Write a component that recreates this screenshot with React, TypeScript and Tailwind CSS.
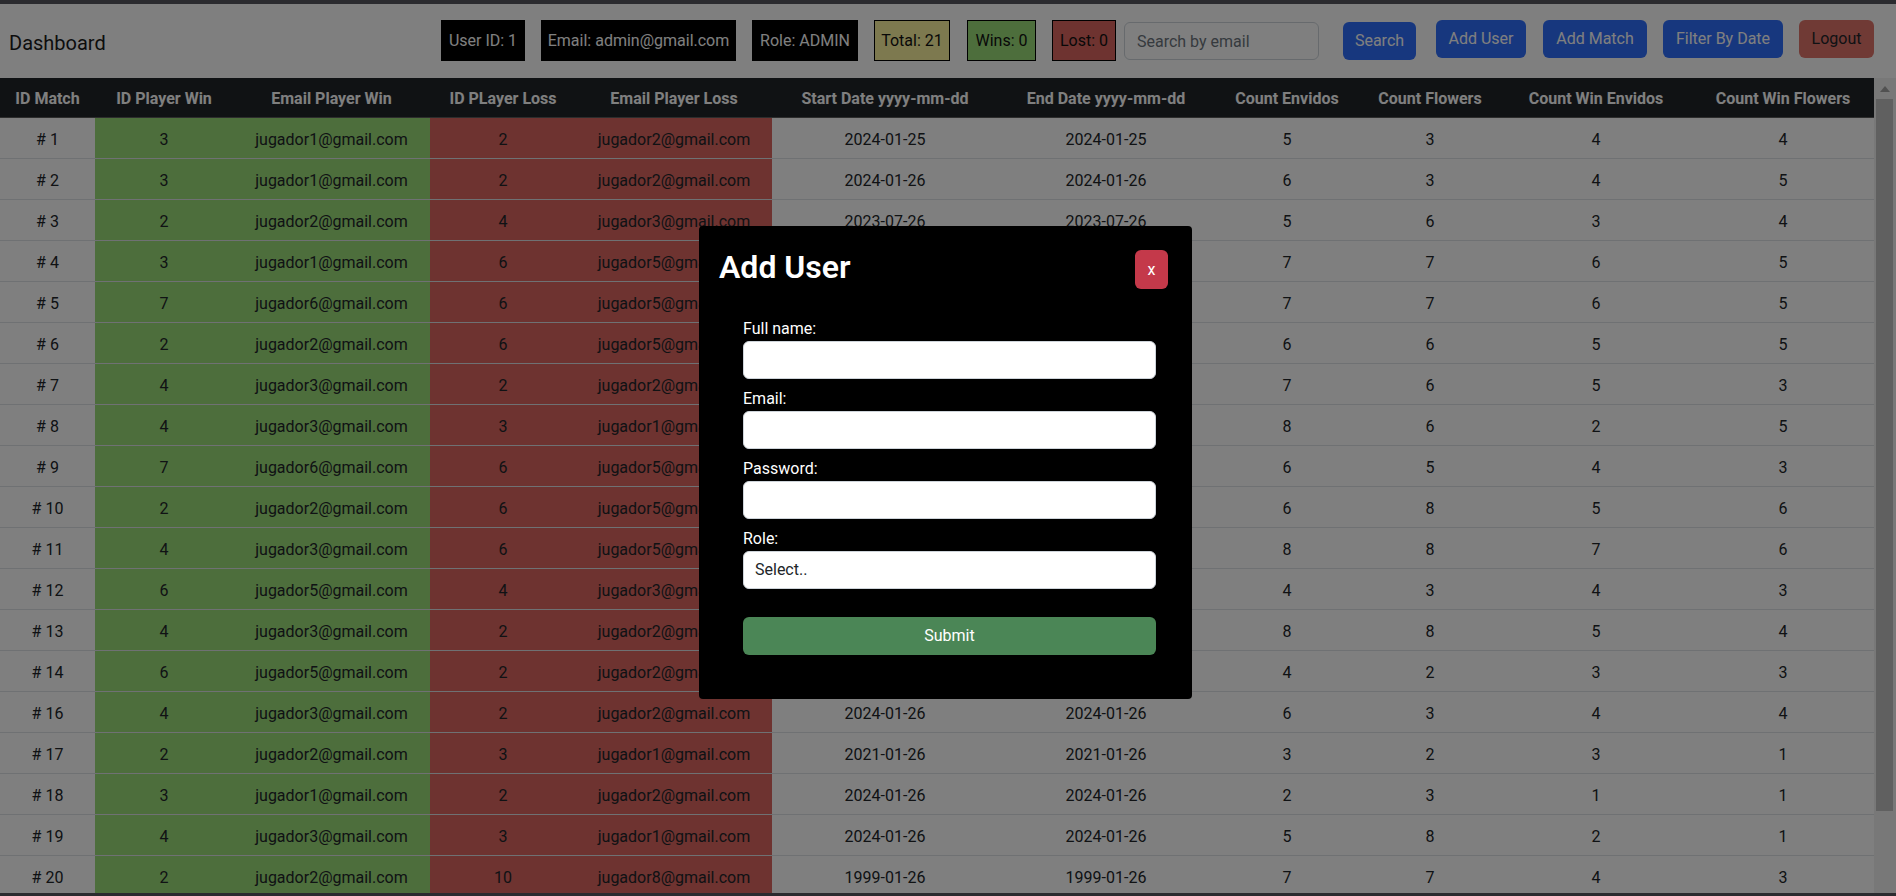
import React from "react";

type Row = {
  id: number;
  w: number;
  we: string;
  l: number;
  le: string;
  s: string;
  e: string;
  ce: number;
  cf: number;
  cwe: number;
  cwf: number;
};

const j = (n: number) => `jugador${n}@gmail.com`;

const rows: Row[] = [
  { id: 1, w: 3, we: j(1), l: 2, le: j(2), s: "2024-01-25", e: "2024-01-25", ce: 5, cf: 3, cwe: 4, cwf: 4 },
  { id: 2, w: 3, we: j(1), l: 2, le: j(2), s: "2024-01-26", e: "2024-01-26", ce: 6, cf: 3, cwe: 4, cwf: 5 },
  { id: 3, w: 2, we: j(2), l: 4, le: j(3), s: "2023-07-26", e: "2023-07-26", ce: 5, cf: 6, cwe: 3, cwf: 4 },
  { id: 4, w: 3, we: j(1), l: 6, le: j(5), s: "2024-01-26", e: "2024-01-26", ce: 7, cf: 7, cwe: 6, cwf: 5 },
  { id: 5, w: 7, we: j(6), l: 6, le: j(5), s: "2024-01-26", e: "2024-01-26", ce: 7, cf: 7, cwe: 6, cwf: 5 },
  { id: 6, w: 2, we: j(2), l: 6, le: j(5), s: "2024-01-26", e: "2024-01-26", ce: 6, cf: 6, cwe: 5, cwf: 5 },
  { id: 7, w: 4, we: j(3), l: 2, le: j(2), s: "2024-01-26", e: "2024-01-26", ce: 7, cf: 6, cwe: 5, cwf: 3 },
  { id: 8, w: 4, we: j(3), l: 3, le: j(1), s: "2024-01-26", e: "2024-01-26", ce: 8, cf: 6, cwe: 2, cwf: 5 },
  { id: 9, w: 7, we: j(6), l: 6, le: j(5), s: "2024-01-26", e: "2024-01-26", ce: 6, cf: 5, cwe: 4, cwf: 3 },
  { id: 10, w: 2, we: j(2), l: 6, le: j(5), s: "2024-01-26", e: "2024-01-26", ce: 6, cf: 8, cwe: 5, cwf: 6 },
  { id: 11, w: 4, we: j(3), l: 6, le: j(5), s: "2024-01-26", e: "2024-01-26", ce: 8, cf: 8, cwe: 7, cwf: 6 },
  { id: 12, w: 6, we: j(5), l: 4, le: j(3), s: "2024-01-26", e: "2024-01-26", ce: 4, cf: 3, cwe: 4, cwf: 3 },
  { id: 13, w: 4, we: j(3), l: 2, le: j(2), s: "2024-01-26", e: "2024-01-26", ce: 8, cf: 8, cwe: 5, cwf: 4 },
  { id: 14, w: 6, we: j(5), l: 2, le: j(2), s: "2024-01-26", e: "2024-01-26", ce: 4, cf: 2, cwe: 3, cwf: 3 },
  { id: 16, w: 4, we: j(3), l: 2, le: j(2), s: "2024-01-26", e: "2024-01-26", ce: 6, cf: 3, cwe: 4, cwf: 4 },
  { id: 17, w: 2, we: j(2), l: 3, le: j(1), s: "2021-01-26", e: "2021-01-26", ce: 3, cf: 2, cwe: 3, cwf: 1 },
  { id: 18, w: 3, we: j(1), l: 2, le: j(2), s: "2024-01-26", e: "2024-01-26", ce: 2, cf: 3, cwe: 1, cwf: 1 },
  { id: 19, w: 4, we: j(3), l: 3, le: j(1), s: "2024-01-26", e: "2024-01-26", ce: 5, cf: 8, cwe: 2, cwf: 1 },
  { id: 20, w: 2, we: j(2), l: 10, le: j(8), s: "1999-01-26", e: "1999-01-26", ce: 7, cf: 7, cwe: 4, cwf: 3 },
];

const headers = [
  "ID Match",
  "ID Player Win",
  "Email Player Win",
  "ID PLayer Loss",
  "Email Player Loss",
  "Start Date yyyy-mm-dd",
  "End Date yyyy-mm-dd",
  "Count Envidos",
  "Count Flowers",
  "Count Win Envidos",
  "Count Win Flowers",
];

const td = "h-[41px] p-0 pt-[3px] text-center align-middle border-b border-[#dee2e6]";
const green = "bg-[#9adc78]";
const red = "bg-[#dc6660]";

function Field({ label, children }: { label: string; children: React.ReactNode }) {
  return (
    <div className="mb-[8px]">
      <label className="block text-[16px] leading-[24px] text-white">{label}</label>
      {children}
    </div>
  );
}

export default function App() {
  return (
    <div className="relative w-[1896px] h-[896px] overflow-hidden bg-white text-[#212529] font-['Segoe_UI',Roboto,'Noto_Sans',sans-serif] flex flex-col">
      <div className="h-[4px] shrink-0 bg-[#56565f]" />

      {/* Header */}
      <div className="h-[74px] shrink-0 flex items-start pt-[16px] pl-[9px] pr-[22px]">
        <div className="h-[45px] flex items-center text-[20px] text-[#1a1a1a]">Dashboard</div>
        <div className="ml-auto flex items-start text-[16px]">
          <div className="h-[41px] w-[84px] flex items-center justify-center bg-black text-white">User ID: 1</div>
          <div className="ml-[16px] h-[41px] w-[195px] flex items-center justify-center bg-black text-white">Email: admin@gmail.com</div>
          <div className="ml-[16px] h-[41px] w-[106px] flex items-center justify-center bg-black text-white">Role: ADMIN</div>
          <div className="ml-[16px] h-[41px] w-[76px] flex items-center justify-center bg-[#fbf39e] border border-black text-[#111]">Total: 21</div>
          <div className="ml-[17px] h-[41px] w-[69px] flex items-center justify-center bg-[#9adc78] border border-black text-[#111]">Wins: 0</div>
          <div className="ml-[16px] h-[41px] w-[64px] flex items-center justify-center bg-[#dc6660] border border-black text-[#111]">Lost: 0</div>
          <input
            className="ml-[8px] mt-[2px] h-[38px] w-[195px] rounded-[6px] border border-[#ced4da] bg-white px-[12px] text-[16px] placeholder:text-[#6c757d] outline-none"
            placeholder="Search by email"
          />
          <button className="ml-[24px] mt-[2px] h-[38px] w-[73px] rounded-[6px] bg-[#2f6ffd] text-white">Search</button>
          <button className="ml-[20px] h-[38px] w-[90px] rounded-[6px] bg-[#2f6ffd] text-white">Add User</button>
          <button className="ml-[17px] h-[38px] w-[104px] rounded-[6px] bg-[#2f6ffd] text-white">Add Match</button>
          <button className="ml-[16px] h-[38px] w-[120px] rounded-[6px] bg-[#2f6ffd] text-white">Filter By Date</button>
          <button className="ml-[16px] h-[38px] w-[75px] rounded-[6px] bg-[#e0746b] text-[#212529]">Logout</button>
        </div>
      </div>

      {/* Table area */}
      <div className="flex-1 min-h-0 flex overflow-hidden">
        <div className="w-[1874px] overflow-hidden">
          <table className="w-[1874px] table-fixed border-separate border-spacing-0 text-[16px]">
            <colgroup>
              <col className="w-[95px]" />
              <col className="w-[138px]" />
              <col className="w-[197px]" />
              <col className="w-[146px]" />
              <col className="w-[196px]" />
              <col className="w-[226px]" />
              <col className="w-[216px]" />
              <col className="w-[146px]" />
              <col className="w-[140px]" />
              <col className="w-[192px]" />
              <col className="w-[182px]" />
            </colgroup>
            <thead>
              <tr>
                {headers.map((h) => (
                  <th
                    key={h}
                    className="h-[40px] p-0 pt-[2px] bg-[#212529] text-white font-bold text-center align-middle border-b border-[#5a5a5a] whitespace-nowrap"
                  >
                    {h}
                  </th>
                ))}
              </tr>
            </thead>
            <tbody>
              {rows.map((r) => (
                <tr key={r.id}>
                  <td className={td}># {r.id}</td>
                  <td className={`${td} ${green}`}>{r.w}</td>
                  <td className={`${td} ${green}`}>{r.we}</td>
                  <td className={`${td} ${red}`}>{r.l}</td>
                  <td className={`${td} ${red}`}>{r.le}</td>
                  <td className={td}>{r.s}</td>
                  <td className={td}>{r.e}</td>
                  <td className={td}>{r.ce}</td>
                  <td className={td}>{r.cf}</td>
                  <td className={td}>{r.cwe}</td>
                  <td className={td}>{r.cwf}</td>
                </tr>
              ))}
            </tbody>
          </table>
        </div>
        {/* scrollbar */}
        <div className="w-[22px] bg-[#f1f1f1] flex flex-col">
          <div className="h-[21px] flex items-center justify-center">
            <svg width="10" height="6" viewBox="0 0 10 6">
              <polygon points="0,6 5,0 10,6" fill="#a3a3a3" />
            </svg>
          </div>
          <div className="ml-[2px] w-[17px] h-[712px] bg-[#c1c1c1]" />
        </div>
      </div>

      <div className="h-[3px] shrink-0 bg-[#56565f]" />

      {/* Overlay */}
      <div className="absolute inset-0 bg-black/50" />

      {/* Modal */}
      <div className="absolute left-[699px] top-[226px] w-[493px] h-[473px] bg-black rounded-[4px]">
        <div className="flex items-start justify-between pl-[20px] pr-[24px] pt-[24px]">
          <h2 className="mt-[-2px] text-[32px] leading-[38px] font-semibold text-white">Add User</h2>
          <button className="w-[33px] h-[39px] rounded-[6px] bg-[#c4394a] text-white text-[16px] leading-none">x</button>
        </div>
        <form className="mt-[28px] ml-[44px] w-[413px]">
          <Field label="Full name:">
            <input className="block w-full h-[38px] rounded-[6px] border border-[#ced4da] bg-white px-[12px] outline-none" />
          </Field>
          <Field label="Email:">
            <input className="block w-full h-[38px] rounded-[6px] border border-[#ced4da] bg-white px-[12px] outline-none" />
          </Field>
          <Field label="Password:">
            <input type="password" className="block w-full h-[38px] rounded-[6px] border border-[#ced4da] bg-white px-[12px] outline-none" />
          </Field>
          <Field label="Role:">
            <select className="block w-full h-[38px] rounded-[6px] border border-[#ced4da] bg-white px-[11px] text-[16px] text-[#212529] appearance-none outline-none">
              <option>Select..</option>
              <option>ADMIN</option>
              <option>USER</option>
            </select>
          </Field>
          <button type="button" className="mt-[28px] block w-full h-[38px] rounded-[6px] bg-[#4b8656] text-white text-[16px]">
            Submit
          </button>
        </form>
      </div>
    </div>
  );
}
